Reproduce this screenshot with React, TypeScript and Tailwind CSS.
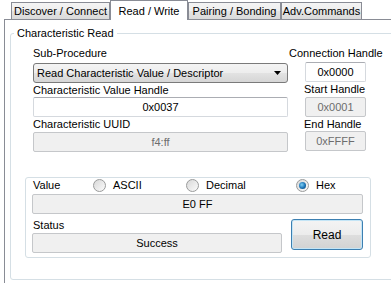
import React from 'react';

const tabs = [
  { label: 'Discover / Connect', w: 'w-[99px]' },
  { label: 'Read / Write', w: 'w-[78px]', active: true },
  { label: 'Pairing / Bonding', w: 'w-[93px]' },
  { label: 'Adv.Commands', w: 'w-[81px]' },
];

function Radio({ label, checked, width }: { label: string; checked?: boolean; width: string }) {
  return (
    <div className={`flex items-center gap-[7px] ${width}`}>
      <span className="flex h-[13px] w-[13px] items-center justify-center rounded-full border border-[#9a9b9b] bg-[linear-gradient(135deg,#d8d8d8,#fbfbfb)]">
        {checked && (
          <span className="h-[7px] w-[7px] rounded-full bg-[radial-gradient(circle_at_40%_40%,#7fd0f5_0%,#1a72b5_55%,#0b3d66_100%)]" />
        )}
      </span>
      <span className="leading-[13px]">{label}</span>
    </div>
  );
}

function TextBox({ value, w, disabled, readOnly }: { value: string; w: string; disabled?: boolean; readOnly?: boolean }) {
  const base = 'flex h-[20px] items-center justify-center rounded-[2px] border';
  const look = disabled
    ? 'border-[#c5c7ca] bg-[#f0f0f0] text-[#6d6d6d]'
    : readOnly
      ? 'border-[#c5c7ca] bg-[#f0f0f0] text-black'
      : 'border-[#d5d9de] border-t-[#abadb3] bg-white text-black';
  return <div className={`${base} ${look} ${w}`}>{value}</div>;
}

export default function App() {
  return (
    <div className="h-[283px] w-[391px] overflow-hidden bg-white font-['Liberation_Sans',Arial,sans-serif] text-[11px] text-black">
      {/* tab strip */}
      <div className="flex h-[19px] items-end pl-[11px]">
        {tabs.map(t =>
          t.active ? (
            <div
              key={t.label}
              className={`relative z-10 -mb-px flex h-[20px] items-start justify-center border-x border-t border-[#898c95] bg-white pt-[2px] ${t.w}`}
            >
              {t.label}
            </div>
          ) : (
            <div
              key={t.label}
              className={`flex h-[17px] items-center justify-center border-x border-t border-[#898c95] bg-[linear-gradient(#f4f4f4,#eeeeee_50%,#e4e4e4_51%,#dadada)] ${t.w}`}
            >
              {t.label}
            </div>
          )
        )}
      </div>

      {/* tab page */}
      <div className="ml-[4px] h-[270px] border-l border-t border-[#898c95] pl-[5px] pt-[7px]">
        <fieldset className="h-[253px] w-[400px] rounded-[3px] border border-[#d5dfe5]">
          <legend className="ml-[3px] px-[3px] leading-[13px]">Characteristic Read</legend>

          <div className="flex">
            {/* left column */}
            <div className="ml-[22px] flex w-[255px] flex-col">
              <div className="mt-[7px] leading-[13px]">Sub-Procedure</div>
              <div className="mt-[3px] flex h-[20px] w-[255px] items-center justify-between rounded-[3px] border border-[#7a7a7a] bg-[linear-gradient(#f4f4f4,#ededed_50%,#e2e2e2_51%,#d6d6d6)] pl-[3px] pr-[6px]">
                <span>Read Characteristic Value / Descriptor</span>
                <svg width="7" height="4" viewBox="0 0 7 4">
                  <path d="M0 0h7L3.5 4z" fill="#000" />
                </svg>
              </div>
              <div className="mt-[1px] leading-[13px]">Characteristic Value Handle</div>
              <TextBox value="0x0037" w="w-[255px]" />
              <div className="mt-[1px] leading-[13px]">Characteristic UUID</div>
              <div className="mt-[1px]">
                <TextBox value="f4:ff" w="w-[255px]" disabled />
              </div>
            </div>

            {/* right column */}
            <div className="ml-px flex flex-col items-start">
              <div className="mt-[7px] leading-[13px]">Connection Handle</div>
              <div className="ml-[16px] mt-[2px]">
                <TextBox value="0x0000" w="w-[61px]" />
              </div>
              <div className="ml-[15px] mt-[1px] leading-[13px]">Start Handle</div>
              <div className="ml-[16px] mt-[1px]">
                <TextBox value="0x0001" w="w-[61px]" disabled />
              </div>
              <div className="ml-[15px] mt-[1px] leading-[13px]">End Handle</div>
              <div className="ml-[16px]">
                <TextBox value="0xFFFF" w="w-[61px]" disabled />
              </div>
            </div>
          </div>

          {/* value group */}
          <div className="ml-[14px] mt-[25px] h-[81px] w-[346px] rounded-[3px] border border-[#d5dfe5]">
            <div className="ml-[6px] mt-[1px] flex items-center">
              <div className="w-[61px] pl-px leading-[13px]">Value</div>
              <Radio label="ASCII" width="w-[93px]" />
              <Radio label="Decimal" width="w-[110px]" />
              <Radio label="Hex" checked width="w-[60px]" />
            </div>
            <div className="ml-[6px] mt-[2px]">
              <TextBox value="E0 FF" w="w-[331px]" readOnly />
            </div>
            <div className="ml-[6px] flex items-start">
              <div className="flex flex-col">
                <div className="mt-[5px] pl-px leading-[13px]">Status</div>
                <div className="mt-[1px]">
                  <TextBox value="Success" w="w-[250px]" readOnly />
                </div>
              </div>
              <button className="ml-[9px] mt-[5px] flex h-[31px] w-[72px] items-center justify-center rounded-[3px] border border-[#3c7fb1] bg-[linear-gradient(#f4f4f4,#ececec_50%,#dedede_51%,#d2d2d2)] text-[12px] shadow-[inset_0_0_0_1px_#c4e5f6]">
                Read
              </button>
            </div>
          </div>
        </fieldset>
      </div>
    </div>
  );
}
